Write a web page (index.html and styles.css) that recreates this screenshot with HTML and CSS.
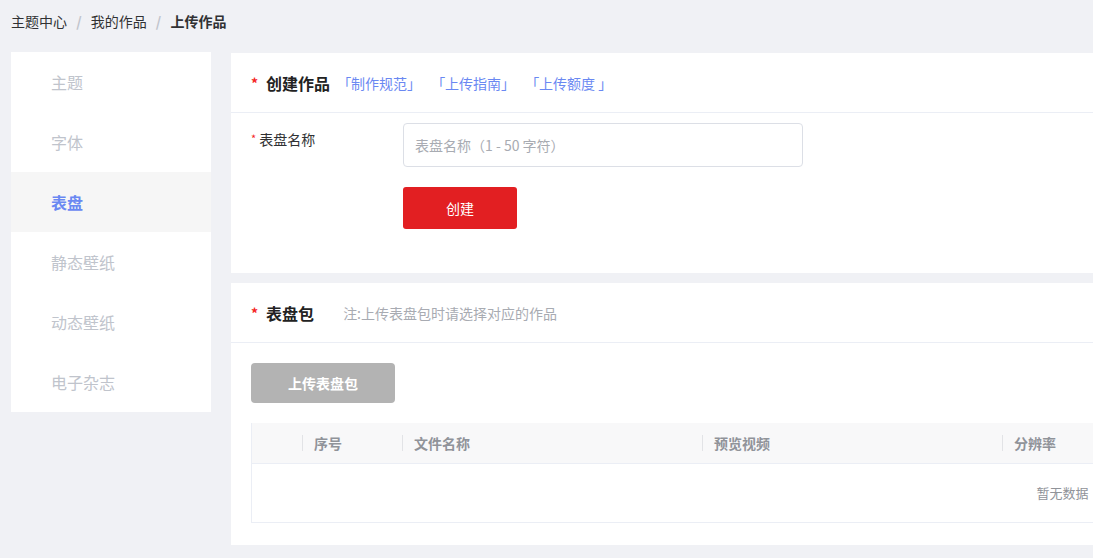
FILE: index.html
```html
<!DOCTYPE html>
<html lang="zh-CN">
<head>
    <meta charset="UTF-8">
    <title>上传作品</title>
    <link rel="stylesheet" href="styles.css">
</head>
<body>
    <div class="page">
        <!-- Breadcrumb -->
        <div class="breadcrumb">
            <span class="crumb">主题中心</span>
            <span class="crumb-sep">/</span>
            <span class="crumb">我的作品</span>
            <span class="crumb-sep">/</span>
            <span class="crumb current">上传作品</span>
        </div>

        <div class="layout">
            <!-- Left menu -->
            <ul class="side-menu">
                <li>主题</li>
                <li>字体</li>
                <li class="active">表盘</li>
                <li>静态壁纸</li>
                <li>动态壁纸</li>
                <li>电子杂志</li>
            </ul>

            <div class="main">
                <!-- Create work -->
                <div class="card">
                    <div class="card-header">
                        <span class="required">*</span>
                        <span class="card-title">创建作品</span>
                        <div class="header-links">
                            <a href="#">「制作规范」</a>
                            <a href="#">「上传指南」</a>
                            <a href="#">「上传额度 」</a>
                        </div>
                    </div>
                    <div class="card-body create-body">
                        <div class="form-row">
                            <label class="form-label"><span class="required small">*</span>表盘名称</label>
                            <input class="text-input" type="text" placeholder="表盘名称（1 - 50 字符）">
                        </div>
                        <button class="btn btn-red">创建</button>
                    </div>
                </div>

                <!-- Watch face package -->
                <div class="card">
                    <div class="card-header">
                        <span class="required">*</span>
                        <span class="card-title">表盘包</span>
                        <span class="card-note">注:上传表盘包时请选择对应的作品</span>
                    </div>
                    <div class="card-body package-body">
                        <button class="btn btn-grey">上传表盘包</button>
                        <div class="table">
                            <div class="table-head">
                                <div class="th"></div>
                                <div class="th"><span>序号</span></div>
                                <div class="th"><span>文件名称</span></div>
                                <div class="th"><span>预览视频</span></div>
                                <div class="th"><span>分辨率</span></div>
                            </div>
                            <div class="table-empty">暂无数据</div>
                        </div>
                    </div>
                </div>
            </div>
        </div>
    </div>
</body>
</html>
```

FILE: styles.css
```css
:root {
    --page-bg: #f0f1f5;
    --blue: #6a88f2;
    --red: #e21f22;
    --border: #ebeef5;
}

body {
    margin: 0;
    background-color: var(--page-bg);
    font-family: "Noto Sans CJK SC", "Noto Sans", sans-serif;
    color: #303133;
    overflow: hidden;
}

.page {
    padding: 0 11px;
}

/* Breadcrumb */
.breadcrumb {
    padding: 11px 0 21px;
    line-height: 20px;
    font-size: 14px;
    white-space: nowrap;
}

.crumb {
    color: #303133;
}

.crumb.current {
    font-weight: 700;
}

.crumb-sep {
    margin: 0 6px;
    color: #c0c4cc;
    font-weight: 700;
}

.layout {
    display: flex;
    align-items: flex-start;
    gap: 20px;
}

/* Side menu */
.side-menu {
    list-style: none;
    margin: 0;
    padding: 0;
    width: 200px;
    flex-shrink: 0;
    background-color: white;
}

.side-menu li {
    height: 60px;
    line-height: 60px;
    padding-left: 40px;
    font-size: 16px;
    color: #c0c4cc;
}

.side-menu li.active {
    background-color: #f6f6f6;
    color: var(--blue);
    font-weight: 700;
}

/* Cards */
.main {
    width: 1662px;
    flex-shrink: 0;
    margin-top: 1px;
}

.card {
    background-color: white;
    margin-bottom: 10px;
}

.card-header {
    height: 59px;
    display: flex;
    align-items: center;
    padding: 0 20px;
    border-bottom: 1px solid var(--border);
}

.required {
    color: #f52525;
    font-size: 14px;
    font-weight: 700;
    margin-right: 8px;
}

.required.small {
    font-size: 11px;
    font-weight: 400;
    margin-right: 3px;
    vertical-align: 2px;
}

.card-title {
    font-size: 16px;
    font-weight: 700;
    color: #222;
}

.header-links {
    display: flex;
    gap: 10px;
    margin-left: 7px;
}

.header-links a {
    color: var(--blue);
    font-size: 14px;
    text-decoration: none;
}

.card-note {
    margin-left: 29px;
    font-size: 14px;
    color: #a8abb2;
}

.card-body {
    padding: 10px 20px 44px;
}

.form-row {
    display: flex;
    align-items: flex-start;
}

.form-label {
    width: 152px;
    line-height: 30px;
    font-size: 14px;
    color: #303133;
}

.text-input {
    box-sizing: border-box;
    width: 400px;
    height: 44px;
    padding: 0 11px;
    border: 1px solid #dcdfe6;
    border-radius: 4px;
    font-family: inherit;
    font-size: 14px;
    color: #303133;
    outline: none;
}

.text-input::placeholder {
    color: #a8abb2;
}

.btn {
    display: block;
    border: none;
    border-radius: 3px;
    font-family: inherit;
    font-size: 14px;
    color: white;
    cursor: pointer;
}

.btn-red {
    margin: 20px 0 0 152px;
    width: 114px;
    height: 42px;
    background-color: var(--red);
}

.btn-grey {
    width: 144px;
    height: 40px;
    background-color: #b3b3b3;
    font-weight: 700;
    border-radius: 4px;
}

.package-body {
    padding: 20px 20px 22px;
}

/* Table */
.table {
    margin-top: 20px;
    border: 1px solid var(--border);
    border-top: none;
    border-right: none;
}

.table-head {
    display: grid;
    grid-template-columns: 50px 100px 300px 300px 1fr;
    height: 40px;
    background-color: #f8f8f9;
    border-bottom: 1px solid var(--border);
}

.th {
    display: flex;
    align-items: center;
    font-size: 14px;
    font-weight: 700;
    color: #909399;
}

.th span {
    line-height: 16px;
    padding-left: 11px;
    border-left: 1px solid #e2e3e6;
}

.table-empty {
    height: 58px;
    line-height: 58px;
    text-align: center;
    font-size: 13px;
    color: #909399;
}
```
